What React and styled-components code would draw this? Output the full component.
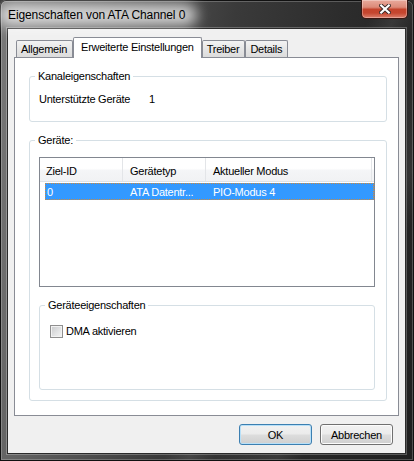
import React from 'react';
import styled, { createGlobalStyle } from 'styled-components';

const GlobalStyle = createGlobalStyle`
  html, body {
    margin: 0;
    padding: 0;
    background: #2a2a2a;
  }
  body {
    font-family: "Liberation Sans", Arial, sans-serif;
    font-size: 11px;
    letter-spacing: -0.25px;
    color: #000;
  }
`;

const Window = styled.div`
  width: 414px;
  height: 461px;
  box-sizing: border-box;
  display: flex;
  flex-direction: column;
  border-radius: 6px 6px 0 0;
  background:
    linear-gradient(115deg, rgba(255,255,255,0) 60%, rgba(255,255,255,0.08) 64%, rgba(255,255,255,0) 68%, rgba(255,255,255,0.07) 78%, rgba(255,255,255,0) 82%),
    linear-gradient(100deg, #7a7a7a 0%, #5e5e5e 22%, #3a3a3a 48%, #2c2c2c 70%, #1f1f1f 100%);
  box-shadow: inset 0 0 0 1px #111, inset 0 0 0 2px rgba(255,255,255,0.22);
`;

const TitleBar = styled.div`
  height: 28px;
  flex: none;
  display: flex;
  justify-content: space-between;
  padding: 0 6px 0 8px;
`;

const Title = styled.span`
  position: relative;
  align-self: center;
  margin-top: 2px;
  font-size: 12px;
  letter-spacing: -0.1px;
  color: #000;
  z-index: 0;
  &::before {
    content: '';
    position: absolute;
    left: -10px;
    right: -12px;
    top: -4px;
    bottom: -4px;
    border-radius: 12px;
    background: rgba(255,255,255,0.75);
    filter: blur(7px);
    z-index: -1;
  }
`;

const CloseButton = styled.div`
  width: 47px;
  height: 19px;
  box-sizing: border-box;
  display: flex;
  align-items: center;
  justify-content: center;
  border: 1px solid #3a1610;
  border-top: none;
  border-radius: 0 0 5px 5px;
  background: linear-gradient(#e9aa9c 0%, #dc8a78 40%, #c4442c 52%, #c5462f 72%, #dc7f6c 100%);
  box-shadow: inset 0 0 0 1px rgba(255,255,255,0.3);
`;

const Client = styled.div`
  flex: 1;
  margin: 0 8px 7px 7px;
  border: 1px solid #2b2b2b;
  background: #f0f0f0;
  display: flex;
  flex-direction: column;
  padding: 8px 6px 0 6px;
  box-shadow: 0 0 0 1px rgba(255,255,255,0.25);
`;

const TabStrip = styled.div`
  height: 20px;
  display: flex;
  align-items: flex-end;
  padding-left: 2px;
  position: relative;
  z-index: 1;
`;

const Tab = styled.div`
  box-sizing: border-box;
  height: ${p => (p.$active ? '21px' : '17px')};
  margin: ${p => (p.$active ? '0 0 -1px 0' : '0')};
  padding: ${p => (p.$active ? '0 7px 2px' : '0 5px 0 4px')};
  display: flex;
  align-items: center;
  border: 1px solid #898c95;
  border-bottom: none;
  border-radius: 2px 2px 0 0;
  background: ${p => (p.$active ? '#fff' : 'linear-gradient(#f3f3f3, #e6e6e6 50%, #dcdcdc)')};
  position: relative;
  z-index: ${p => (p.$active ? 2 : 1)};
`;

const Panel = styled.div`
  height: 359px;
  box-sizing: border-box;
  border: 1px solid #898c95;
  background: #fff;
  padding: 11px 11px 0 14px;
`;

const Group = styled.fieldset`
  margin: ${p => p.$margin || '0'};
  padding: ${p => p.$padding};
  height: ${p => p.$height || 'auto'};
  box-sizing: border-box;
  min-width: 0;
  border: 1px solid #d5dfe5;
  border-radius: 3px;
`;

const Legend = styled.legend`
  padding: 0 3px;
  margin-left: ${p => p.$shift}px;
  line-height: 15px;
`;

const InfoRow = styled.div`
  display: grid;
  grid-template-columns: 110px auto;
  line-height: 15px;
`;

const ListView = styled.div`
  height: 130px;
  box-sizing: border-box;
  border: 1px solid #828790;
  background: #fff;
`;

const HeaderRow = styled.div`
  height: 24px;
  box-sizing: border-box;
  display: grid;
  grid-template-columns: 83px 83px 1fr;
  padding-right: 2px;
  background: linear-gradient(#ffffff 0%, #ffffff 45%, #f4f5f7 55%, #f1f2f4 100%);
  border-bottom: 1px solid #dfe2e6;
`;

const HeaderCell = styled.div`
  display: flex;
  align-items: center;
  padding: 2px 0 0 ${p => p.$pad}px;
  border-right: 1px solid #e3e5e8;
`;

const Row = styled.div`
  height: 17px;
  box-sizing: border-box;
  margin: 1px 0 0 5px;
  display: grid;
  grid-template-columns: 77px 83px 1fr;
  background: #3399ff;
  border: 1px dotted #cf8a3c;
  color: #fff;
`;

const Cell = styled.div`
  display: flex;
  align-items: center;
  padding-left: ${p => p.$pad}px;
  white-space: nowrap;
  overflow: hidden;
`;

const CheckRow = styled.label`
  display: flex;
  align-items: center;
  gap: 3px;
  line-height: 15px;
`;

const CheckBox = styled.span`
  width: 13px;
  height: 13px;
  box-sizing: border-box;
  border: 1px solid #8f8f8f;
  background: linear-gradient(135deg, #c9cacc 0%, #e4e5e6 60%, #f4f4f4 100%);
  box-shadow: inset 0 0 0 1px #f2f2f2;
`;

const ButtonRow = styled.div`
  display: flex;
  justify-content: flex-end;
  gap: 8px;
  padding: 8px 6px 8px 0;
`;

const Button = styled.button`
  width: 73px;
  height: 21px;
  box-sizing: border-box;
  padding: 0;
  font: inherit;
  letter-spacing: inherit;
  color: #000;
  border: 1px solid ${p => (p.$default ? '#3c7fb1' : '#707070')};
  border-radius: 3px;
  background: linear-gradient(#f2f2f2 0%, #ebebeb 48%, #dddddd 52%, #cfcfcf 100%);
  box-shadow: inset 0 0 0 1px ${p => (p.$default ? '#b8e0f8' : '#fcfcfc')};
`;

const CloseIcon = () => (
  <svg width="12" height="10" viewBox="0 0 12 10">
    <path d="M2.2 1.5 L9.8 8.5 M9.8 1.5 L2.2 8.5" stroke="#3b2a28" strokeWidth="4" strokeLinecap="square" />
    <path d="M2.2 1.5 L9.8 8.5 M9.8 1.5 L2.2 8.5" stroke="#fff" strokeWidth="2.2" strokeLinecap="square" />
  </svg>
);

const tabs = ['Allgemein', 'Erweiterte Einstellungen', 'Treiber', 'Details'];

export default function App() {
  return (
    <>
      <GlobalStyle />
      <Window>
        <TitleBar>
          <Title>Eigenschaften von ATA Channel 0</Title>
          <CloseButton>
            <CloseIcon />
          </CloseButton>
        </TitleBar>
        <Client>
          <TabStrip>
            {tabs.map((t, i) => (
              <Tab key={t} $active={i === 1}>{t}</Tab>
            ))}
          </TabStrip>
          <Panel>
            <Group $padding="8px 11px 14px 9px">
              <Legend $shift={-4}>Kanaleigenschaften</Legend>
              <InfoRow>
                <span>Unterstützte Geräte</span>
                <span>1</span>
              </InfoRow>
            </Group>
            <Group $margin="11px 0 0 0" $padding="9px 11px 10px 9px">
              <Legend $shift={-4}>Geräte:</Legend>
              <ListView>
                <HeaderRow>
                  <HeaderCell $pad={6}>Ziel-ID</HeaderCell>
                  <HeaderCell $pad={7}>Gerätetyp</HeaderCell>
                  <HeaderCell $pad={7}>Aktueller Modus</HeaderCell>
                </HeaderRow>
                <Row>
                  <Cell $pad={1}>0</Cell>
                  <Cell $pad={7}>ATA Datentr...</Cell>
                  <Cell $pad={7}>PIO-Modus 4</Cell>
                </Row>
              </ListView>
              <Group $margin="11px 0 0 0" $padding="11px 11px 0 10px" $height="92px">
                <Legend $shift={-5}>Geräteeigenschaften</Legend>
                <CheckRow>
                  <CheckBox />
                  <span>DMA aktivieren</span>
                </CheckRow>
              </Group>
            </Group>
          </Panel>
          <ButtonRow>
            <Button $default>OK</Button>
            <Button>Abbrechen</Button>
          </ButtonRow>
        </Client>
      </Window>
    </>
  );
}
